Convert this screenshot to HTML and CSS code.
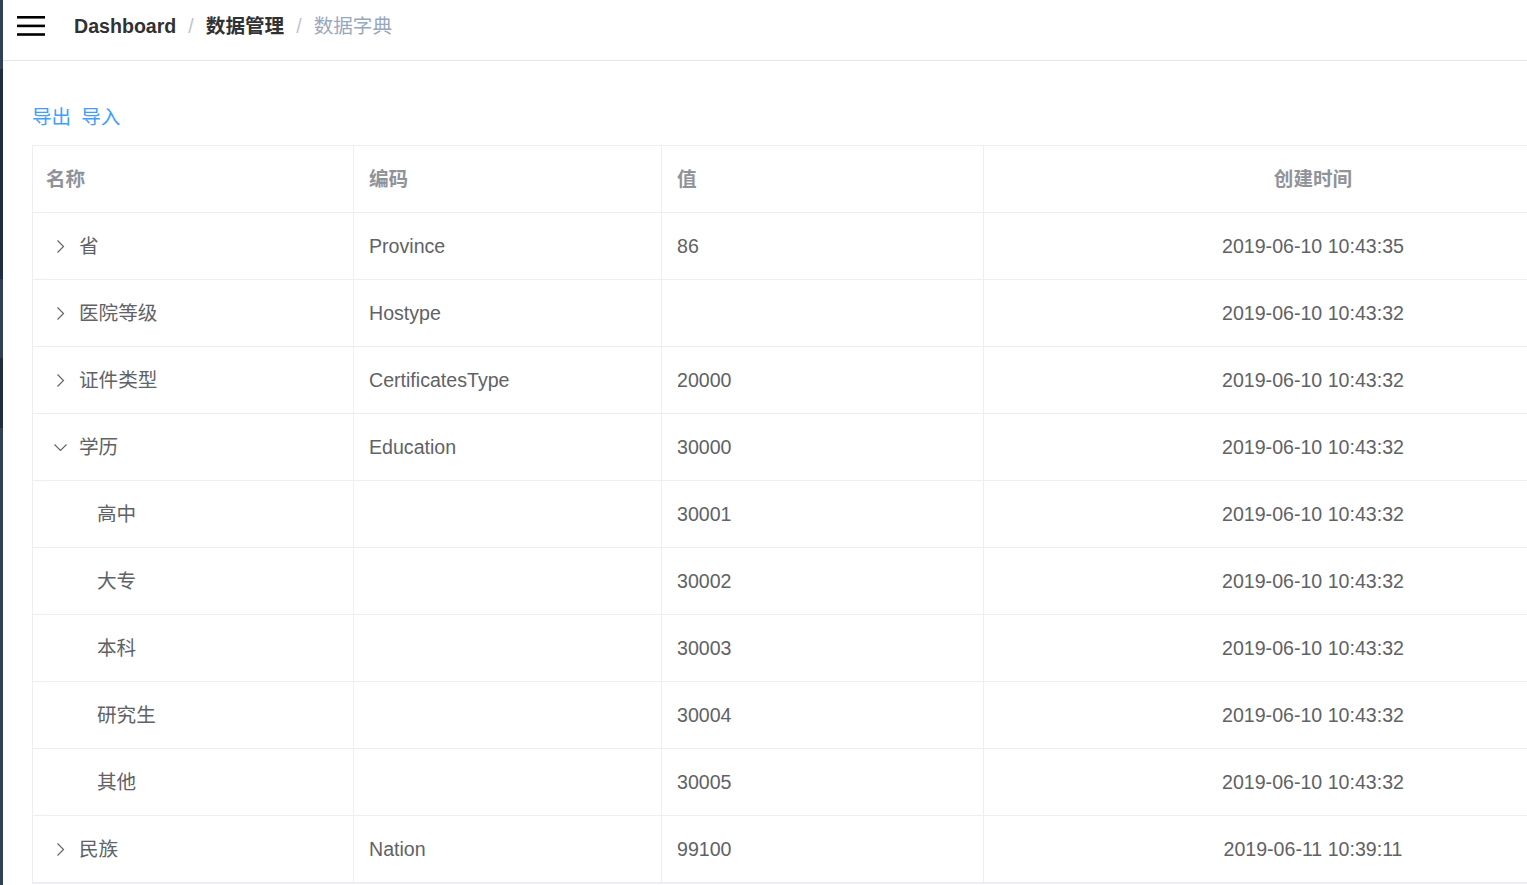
FILE: index.html
```html
<!DOCTYPE html>
<html lang="zh-CN">
<head>
<meta charset="utf-8">
<title>数据字典</title>
<link rel="stylesheet" href="styles.css">
</head>
<body>
<div class="app">
  <aside class="sidebar">
    <div class="seg light h69"></div>
    <div class="seg dark h210"></div>
    <div class="seg light h79"></div>
    <div class="seg dark h70"></div>
    <div class="seg light grow"></div>
  </aside>
  <div class="main">
    <header class="navbar">
      <div class="hamburger">
        <svg width="28" height="22" viewBox="0 0 28 22"><rect x="0" y="1" width="28" height="2.6" fill="#000"/><rect x="0" y="9.6" width="28" height="2.6" fill="#000"/><rect x="0" y="18.2" width="28" height="2.6" fill="#000"/></svg>
      </div>
      <nav class="breadcrumb">
        <span class="crumb strong">Dashboard</span>
        <span class="sep">/</span>
        <span class="crumb strong">数据管理</span>
        <span class="sep">/</span>
        <span class="crumb last">数据字典</span>
      </nav>
    </header>
    <section class="content">
      <div class="toolbar">
        <a class="link">导出</a>
        <a class="link">导入</a>
      </div>
      <table class="dict-table">
        <colgroup>
          <col class="c1"><col class="c2"><col class="c3"><col class="c4">
        </colgroup>
        <thead>
          <tr><th>名称</th><th>编码</th><th>值</th><th class="center">创建时间</th></tr>
        </thead>
        <tbody>
          <tr><td><span class="expand"><svg width="17" height="17" viewBox="0 0 17 17"><path d="M5.5 2.5 L11.5 8.5 L5.5 14.5" fill="none" stroke="#666" stroke-width="1.2"/></svg></span>省</td><td>Province</td><td>86</td><td class="center">2019-06-10 10:43:35</td></tr>
          <tr><td><span class="expand"><svg width="17" height="17" viewBox="0 0 17 17"><path d="M5.5 2.5 L11.5 8.5 L5.5 14.5" fill="none" stroke="#666" stroke-width="1.2"/></svg></span>医院等级</td><td>Hostype</td><td></td><td class="center">2019-06-10 10:43:32</td></tr>
          <tr><td><span class="expand"><svg width="17" height="17" viewBox="0 0 17 17"><path d="M5.5 2.5 L11.5 8.5 L5.5 14.5" fill="none" stroke="#666" stroke-width="1.2"/></svg></span>证件类型</td><td>CertificatesType</td><td>20000</td><td class="center">2019-06-10 10:43:32</td></tr>
          <tr><td><span class="expand open"><svg width="17" height="17" viewBox="0 0 17 17"><path d="M5.5 2.5 L11.5 8.5 L5.5 14.5" fill="none" stroke="#666" stroke-width="1.2"/></svg></span>学历</td><td>Education</td><td>30000</td><td class="center">2019-06-10 10:43:32</td></tr>
          <tr><td><span class="indent"></span><span class="placeholder"></span>高中</td><td></td><td>30001</td><td class="center">2019-06-10 10:43:32</td></tr>
          <tr><td><span class="indent"></span><span class="placeholder"></span>大专</td><td></td><td>30002</td><td class="center">2019-06-10 10:43:32</td></tr>
          <tr><td><span class="indent"></span><span class="placeholder"></span>本科</td><td></td><td>30003</td><td class="center">2019-06-10 10:43:32</td></tr>
          <tr><td><span class="indent"></span><span class="placeholder"></span>研究生</td><td></td><td>30004</td><td class="center">2019-06-10 10:43:32</td></tr>
          <tr><td><span class="indent"></span><span class="placeholder"></span>其他</td><td></td><td>30005</td><td class="center">2019-06-10 10:43:32</td></tr>
          <tr><td><span class="expand"><svg width="17" height="17" viewBox="0 0 17 17"><path d="M5.5 2.5 L11.5 8.5 L5.5 14.5" fill="none" stroke="#666" stroke-width="1.2"/></svg></span>民族</td><td>Nation</td><td>99100</td><td class="center">2019-06-11 10:39:11</td></tr>
        </tbody>
      </table>
    </section>
  </div>
</div>
</body>
</html>
```

FILE: styles.css
```css
* { box-sizing: border-box; }
html, body { margin: 0; padding: 0; height: 100%; }
body {
  font-family: "Liberation Sans", Arial, "Noto Sans CJK SC", sans-serif;
  font-size: 19.6px;
  color: #606266;
  background: #fff;
  overflow: hidden;
}
.app { display: flex; height: 885px; }
.sidebar { width: 3px; flex: none; display: flex; flex-direction: column; }
.seg { flex: none; }
.seg.light { background: #304156; }
.seg.dark { background: #1f2d3d; }
.h69 { height: 69px; }
.h210 { height: 210px; }
.h79 { height: 79px; }
.h70 { height: 70px; }
.seg.grow { flex: 1; }

.main { flex: 1; min-width: 0; overflow: hidden; }
.navbar {
  height: 61px;
  border-bottom: 1px solid #e6e6e6;
  display: flex;
  align-items: center;
  padding-bottom: 8px;
}
.hamburger { width: 42px; margin-left: 14px; height: 22px; display: flex; align-items: center; }
.hamburger svg { display: block; }
.breadcrumb { margin-left: 15px; display: flex; align-items: center; line-height: 26px; }
.crumb.strong { font-weight: bold; color: #303133; }
.crumb.last { color: #97a8be; }
.sep { color: #c0c4cc; margin: 0 12px; }

.content { padding: 42px 0 0 29px; }
.toolbar { height: 28px; line-height: 28px; margin-bottom: 14px; display: flex; gap: 10px; }
.link { color: #409eff; cursor: pointer; }

.dict-table {
  width: 1613px;
  table-layout: fixed;
  border-collapse: separate;
  border-spacing: 0;
  border-top: 1px solid #ebeef5;
  border-left: 1px solid #ebeef5;
  border-bottom: 1px solid #ebeef5;
}
.c1 { width: 321px; }
.c2 { width: 308px; }
.c3 { width: 322px; }
.c4 { width: 661px; }
.dict-table th, .dict-table td {
  padding: 0 14px 0 15px;
  line-height: 66px;
  border-right: 1px solid #ebeef5;
  border-bottom: 1px solid #ebeef5;
  text-align: left;
  white-space: nowrap;
  overflow: hidden;
}
.dict-table th:first-child, .dict-table td:first-child { padding-left: 13px; }
.dict-table th { color: #909399; font-weight: bold; }
.dict-table td { color: #606266; }
.dict-table .center { text-align: center; padding: 0 15px 0 13px; }
.expand {
  display: inline-block;
  width: 28px;
  margin-right: 5px;
  height: 20px;
  vertical-align: -3px;
  text-align: center;
}
.expand svg { display: block; margin: 2px auto 0; }
.expand.open svg { transform: rotate(90deg); }
.indent { display: inline-block; width: 23px; }
.placeholder { display: inline-block; width: 28px; }
```
